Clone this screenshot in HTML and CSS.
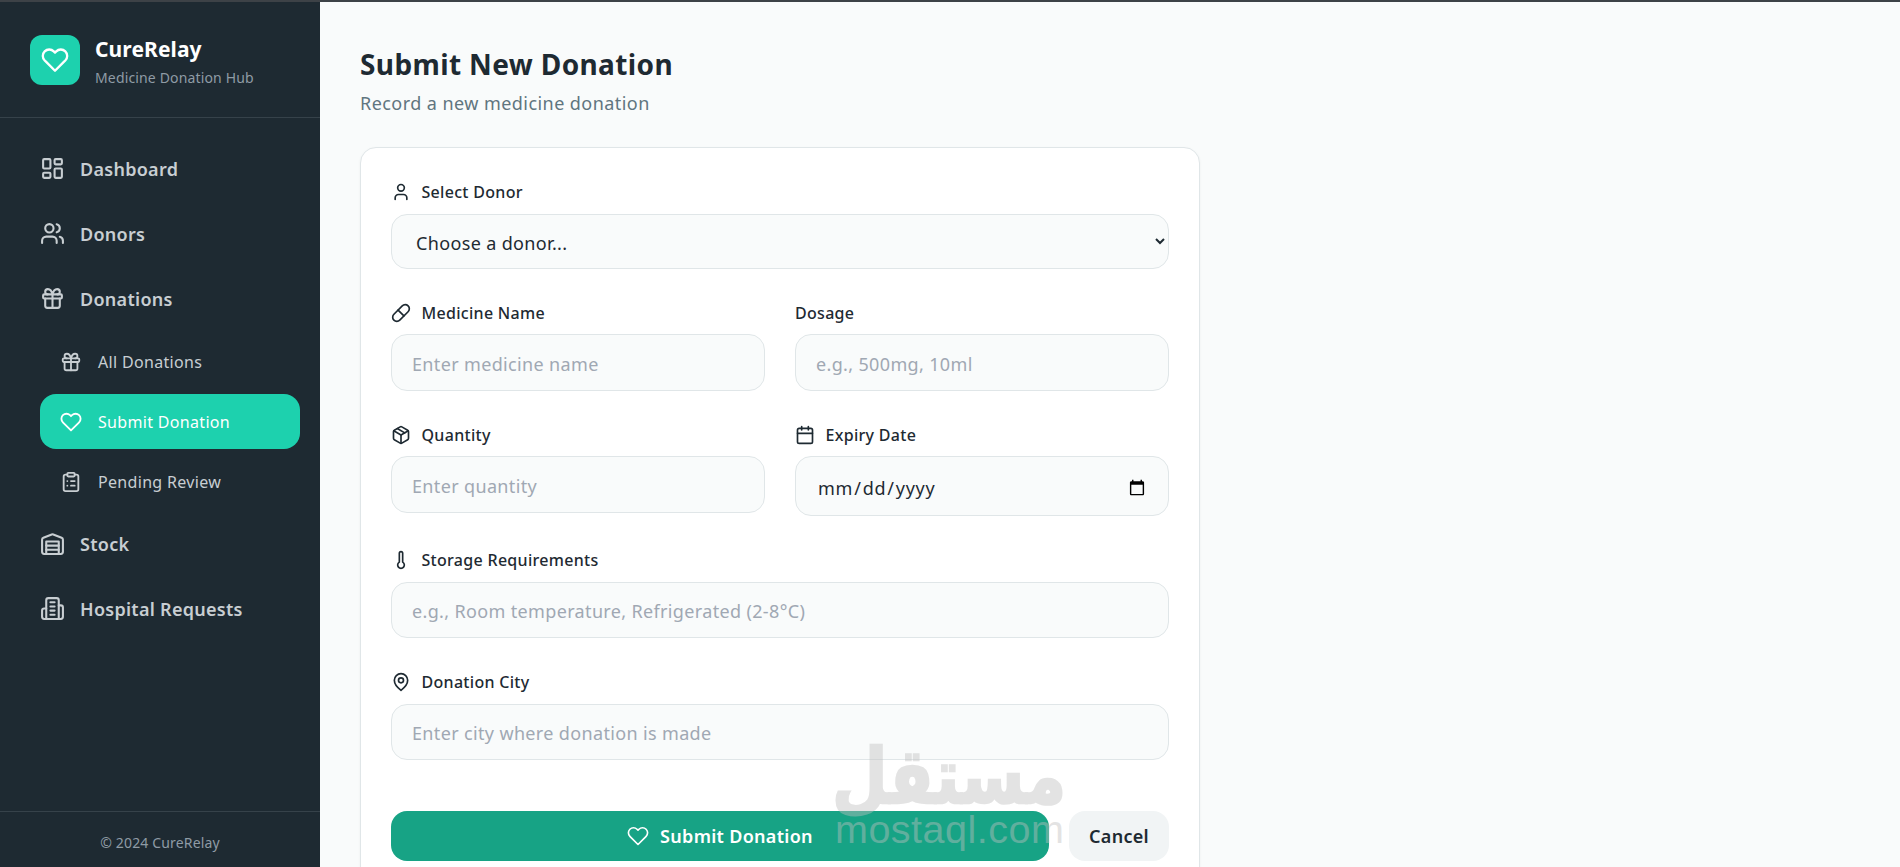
FILE: index.html
```html
<!DOCTYPE html>
<html lang="en">
<head>
    <meta charset="UTF-8">
    <meta name="viewport" content="width=device-width, initial-scale=1.0">
    <title>Submit Donation - CureRelay</title>
    <link rel="stylesheet" href="styles.css">
</head>
<body>

    <svg class="icon-defs" aria-hidden="true">
        <symbol id="i-heart" viewBox="0 0 24 24"><path d="M20.84 4.61a5.5 5.5 0 0 0-7.78 0L12 5.67l-1.06-1.06a5.5 5.5 0 0 0-7.78 7.78l1.06 1.06L12 21.23l7.78-7.78 1.06-1.06a5.5 5.5 0 0 0 0-7.78z"/></symbol>
        <symbol id="i-dashboard" viewBox="0 0 24 24"><rect x="3" y="3" width="7" height="9" rx="1"/><rect x="14" y="3" width="7" height="5" rx="1"/><rect x="14" y="12" width="7" height="9" rx="1"/><rect x="3" y="16" width="7" height="5" rx="1"/></symbol>
        <symbol id="i-users" viewBox="0 0 24 24"><path d="M16 21v-2a4 4 0 0 0-4-4H6a4 4 0 0 0-4 4v2"/><circle cx="9" cy="7" r="4"/><path d="M22 21v-2a4 4 0 0 0-3-3.87"/><path d="M16 3.13a4 4 0 0 1 0 7.75"/></symbol>
        <symbol id="i-gift" viewBox="0 0 24 24"><rect x="3" y="8" width="18" height="4" rx="1"/><path d="M12 8v13"/><path d="M19 12v7a2 2 0 0 1-2 2H7a2 2 0 0 1-2-2v-7"/><path d="M7.5 8a2.5 2.5 0 0 1 0-5A4.8 8 0 0 1 12 8a4.8 8 0 0 1 4.5-5 2.5 2.5 0 0 1 0 5"/></symbol>
        <symbol id="i-clipboard" viewBox="0 0 24 24"><rect x="8" y="2" width="8" height="4" rx="1"/><path d="M16 4h2a2 2 0 0 1 2 2v14a2 2 0 0 1-2 2H6a2 2 0 0 1-2-2V6a2 2 0 0 1 2-2h2"/><path d="M12 11h4"/><path d="M12 16h4"/><path d="M8 11h.01"/><path d="M8 16h.01"/></symbol>
        <symbol id="i-warehouse" viewBox="0 0 24 24"><path d="M22 8.35V20a2 2 0 0 1-2 2H4a2 2 0 0 1-2-2V8.35A2 2 0 0 1 3.26 6.5l8-3.2a2 2 0 0 1 1.48 0l8 3.2A2 2 0 0 1 22 8.35Z"/><path d="M6 18h12"/><path d="M6 14h12"/><rect x="6" y="10" width="12" height="12"/></symbol>
        <symbol id="i-building" viewBox="0 0 24 24"><path d="M6 22V4a2 2 0 0 1 2-2h8a2 2 0 0 1 2 2v18Z"/><path d="M6 12H4a2 2 0 0 0-2 2v6a2 2 0 0 0 2 2h2"/><path d="M18 9h2a2 2 0 0 1 2 2v9a2 2 0 0 1-2 2h-2"/><path d="M10 6h4"/><path d="M10 10h4"/><path d="M10 14h4"/><path d="M10 18h4"/></symbol>
        <symbol id="i-user" viewBox="0 0 24 24"><path d="M19 21v-2a4 4 0 0 0-4-4H9a4 4 0 0 0-4 4v2"/><circle cx="12" cy="7" r="4"/></symbol>
        <symbol id="i-pill" viewBox="0 0 24 24"><path d="m10.5 20.5 10-10a4.95 4.95 0 1 0-7-7l-10 10a4.95 4.95 0 1 0 7 7Z"/><path d="m8.5 8.5 7 7"/></symbol>
        <symbol id="i-package" viewBox="0 0 24 24"><path d="M11 21.73a2 2 0 0 0 2 0l7-4A2 2 0 0 0 21 16V8a2 2 0 0 0-1-1.73l-7-4a2 2 0 0 0-2 0l-7 4A2 2 0 0 0 3 8v8a2 2 0 0 0 1 1.73z"/><path d="M12 22V12"/><polyline points="3.29 7 12 12 20.71 7"/><path d="m7.5 4.27 9 5.15"/></symbol>
        <symbol id="i-calendar" viewBox="0 0 24 24"><path d="M8 2v4"/><path d="M16 2v4"/><rect x="3" y="4" width="18" height="18" rx="2"/><path d="M3 10h18"/></symbol>
        <symbol id="i-thermometer" viewBox="0 0 24 24"><path d="M14 4v10.54a4 4 0 1 1-4 0V4a2 2 0 0 1 4 0Z"/></symbol>
        <symbol id="i-pin" viewBox="0 0 24 24"><path d="M20 10c0 6-8 12-8 12s-8-6-8-12a8 8 0 0 1 16 0Z"/><circle cx="12" cy="10" r="3"/></symbol>
    </svg>

    <div class="app">
        <aside class="sidebar">
            <div class="brand">
                <div class="brand-logo"><svg class="icon"><use href="#i-heart"/></svg></div>
                <div class="brand-text">
                    <div class="brand-name">CureRelay</div>
                    <div class="brand-tag">Medicine Donation Hub</div>
                </div>
            </div>

            <nav class="nav">
                <a class="nav-item"><svg class="icon"><use href="#i-dashboard"/></svg>Dashboard</a>
                <a class="nav-item"><svg class="icon"><use href="#i-users"/></svg>Donors</a>
                <a class="nav-item"><svg class="icon"><use href="#i-gift"/></svg>Donations</a>
                <div class="subnav">
                    <a class="sub-item"><svg class="icon"><use href="#i-gift"/></svg>All Donations</a>
                    <a class="sub-item active"><svg class="icon"><use href="#i-heart"/></svg>Submit Donation</a>
                    <a class="sub-item"><svg class="icon"><use href="#i-clipboard"/></svg>Pending Review</a>
                </div>
                <a class="nav-item"><svg class="icon"><use href="#i-warehouse"/></svg>Stock</a>
                <a class="nav-item"><svg class="icon"><use href="#i-building"/></svg>Hospital Requests</a>
            </nav>

            <div class="sidebar-footer">© 2024 CureRelay</div>
        </aside>

        <main class="main">
            <h1>Submit New Donation</h1>
            <p class="subtitle">Record a new medicine donation</p>

            <form class="card">
                <div class="field">
                    <label for="donor"><svg class="icon"><use href="#i-user"/></svg>Select Donor</label>
                    <select id="donor" class="control">
                        <option>Choose a donor...</option>
                    </select>
                </div>

                <div class="row">
                    <div class="field">
                        <label for="medicine"><svg class="icon"><use href="#i-pill"/></svg>Medicine Name</label>
                        <input id="medicine" class="control" type="text" placeholder="Enter medicine name">
                    </div>
                    <div class="field">
                        <label for="dosage">Dosage</label>
                        <input id="dosage" class="control" type="text" placeholder="e.g., 500mg, 10ml">
                    </div>
                </div>

                <div class="row">
                    <div class="field">
                        <label for="quantity"><svg class="icon"><use href="#i-package"/></svg>Quantity</label>
                        <input id="quantity" class="control" type="text" placeholder="Enter quantity">
                    </div>
                    <div class="field">
                        <label for="expiry"><svg class="icon"><use href="#i-calendar"/></svg>Expiry Date</label>
                        <input id="expiry" class="control" type="date">
                    </div>
                </div>

                <div class="field">
                    <label for="storage"><svg class="icon"><use href="#i-thermometer"/></svg>Storage Requirements</label>
                    <input id="storage" class="control" type="text" placeholder="e.g., Room temperature, Refrigerated (2-8°C)">
                </div>

                <div class="field">
                    <label for="city"><svg class="icon"><use href="#i-pin"/></svg>Donation City</label>
                    <input id="city" class="control" type="text" placeholder="Enter city where donation is made">
                </div>

                <div class="actions">
                    <button class="btn-submit" type="button"><svg class="icon"><use href="#i-heart"/></svg>Submit Donation</button>
                    <button class="btn-cancel" type="button">Cancel</button>
                </div>
            </form>
        </main>
    </div>

    <div class="watermark">
        <div class="watermark-ar">مستقل</div>
        <div class="watermark-en">mostaql.com</div>
    </div>

</body>
</html>
```

FILE: styles.css
```css
* {
    box-sizing: border-box;
}

html, body {
    height: 100%;
}

body {
    margin: 0;
    font-family: 'Noto Sans', 'Open Sans', sans-serif;
    background-color: #f9fbfb;
    color: #1e2a32;
    border-top: 2px solid #3d4247;
    overflow: hidden;
    position: relative;
}

.icon-defs {
    display: none;
}

.icon {
    width: 24px;
    height: 24px;
    fill: none;
    stroke: currentColor;
    stroke-width: 2;
    stroke-linecap: round;
    stroke-linejoin: round;
    flex-shrink: 0;
}

.app {
    display: flex;
    height: 100%;
}

/* sidebar */

.sidebar {
    width: 320px;
    flex-shrink: 0;
    background-color: #1e2a32;
    display: flex;
    flex-direction: column;
}

.brand {
    display: flex;
    align-items: center;
    gap: 15px;
    height: 116px;
    padding: 0 30px;
    border-bottom: 1px solid #36424a;
}

.brand-logo {
    width: 50px;
    height: 50px;
    border-radius: 12px;
    background-color: #1dd1ae;
    color: #fff;
    display: flex;
    align-items: center;
    justify-content: center;
}

.brand-logo .icon {
    width: 28px;
    height: 28px;
}

.brand-text {
    padding-top: 4px;
}

.brand-name {
    font-size: 21px;
    font-weight: 700;
    line-height: 28px;
    letter-spacing: 0.1px;
    color: #fff;
}

.brand-tag {
    font-size: 14px;
    line-height: 20px;
    margin-top: 4.5px;
    letter-spacing: 0.15px;
    color: #8f9ba5;
}

.nav {
    flex: 1;
    padding: 18px 20px 0 40px;
    display: flex;
    flex-direction: column;
}

.nav-item {
    display: flex;
    align-items: center;
    gap: 15px;
    height: 65px;
    color: #c8ced2;
    font-size: 18px;
    font-weight: 600;
    letter-spacing: 0.28px;
}

.nav-item .icon {
    width: 25px;
    height: 25px;
}

.subnav {
    display: flex;
    flex-direction: column;
    gap: 5px;
    padding-top: 2.5px;
    margin-bottom: 2.5px;
}

.sub-item {
    display: flex;
    align-items: center;
    gap: 16px;
    height: 55px;
    padding-left: 20px;
    padding-top: 1px;
    border-radius: 16px;
    color: #c8ced2;
    font-size: 16px;
    letter-spacing: 0.32px;
}

.sub-item .icon {
    width: 22px;
    height: 22px;
}

.sub-item.active {
    background-color: #1dd1ae;
    color: #fff;
}

.sidebar-footer {
    height: 56px;
    padding-top: 5px;
    border-top: 1px solid #36424a;
    display: flex;
    align-items: center;
    justify-content: center;
    font-size: 14px;
    letter-spacing: 0.15px;
    color: #8f9ba5;
}

/* main */

.main {
    flex: 1;
    padding: 42px 40px 0;
    overflow: hidden;
}

h1 {
    margin: 0;
    font-size: 28px;
    font-weight: 700;
    line-height: 40px;
    letter-spacing: 0.38px;
    color: #1e2a32;
}

.subtitle {
    margin: 5px 0 0;
    font-size: 18px;
    line-height: 28px;
    letter-spacing: 0.44px;
    color: #60757f;
}

.card {
    width: 840px;
    margin-top: 30px;
    padding: 32px 30px 40px;
    background-color: #fff;
    border: 1px solid #e0e6e8;
    border-radius: 16px;
    box-shadow: 0 1px 3px rgba(0, 0, 0, 0.05);
}

.row {
    display: grid;
    grid-template-columns: 1fr 1fr;
    column-gap: 30px;
    align-items: start;
}

.field {
    margin-bottom: 32px;
}

label {
    display: flex;
    align-items: center;
    gap: 10.5px;
    height: 24px;
    margin-bottom: 9.5px;
    font-size: 16px;
    font-weight: 500;
    letter-spacing: 0.3px;
}

label .icon {
    width: 20px;
    height: 20px;
}

.control {
    display: block;
    width: 100%;
    height: 56.5px;
    padding: 3px 20px 0;
    background-color: #f9fbfb;
    border: 1px solid #e0e6e8;
    border-radius: 16px;
    font-family: inherit;
    font-size: 18px;
    letter-spacing: 0.35px;
    color: #1e2a32;
    outline: none;
}

.control::placeholder {
    color: #a0a8b3;
}

select.control {
    height: 55px;
}

input[type="date"].control {
    height: 60px;
    padding-left: 21px;
    letter-spacing: 0.75px;
}

.actions {
    display: flex;
    gap: 20px;
    margin-top: 50.5px;
}

.actions button {
    height: 50px;
    border: none;
    border-radius: 16px;
    font-family: inherit;
    font-size: 18px;
    font-weight: 600;
    letter-spacing: 0.3px;
    display: flex;
    align-items: center;
    justify-content: center;
    gap: 11px;
}

.btn-submit {
    flex: 1;
    background-color: #17a385;
    color: #fff;
}

.btn-submit .icon {
    width: 22px;
    height: 22px;
    stroke-width: 1.8;
}

.btn-cancel {
    width: 100px;
    background-color: #f1f4f5;
    color: #1e2a32;
}

/* site watermark over the screenshot */

.watermark {
    position: absolute;
    left: 832px;
    top: 744px;
    width: 232px;
    text-align: center;
    color: #c0c0c0;
    opacity: 0.43;
    pointer-events: none;
}

.watermark-ar {
    font-family: 'DejaVu Sans', sans-serif;
    font-size: 64px;
    font-weight: 700;
    line-height: 63px;
    -webkit-text-stroke: 2px #c0c0c0;
    transform: scaleY(1.2);
}

.watermark-en {
    font-family: 'Liberation Sans', sans-serif;
    font-size: 39.5px;
    line-height: 40px;
    letter-spacing: 0.5px;
    margin-left: 3px;
}
```
